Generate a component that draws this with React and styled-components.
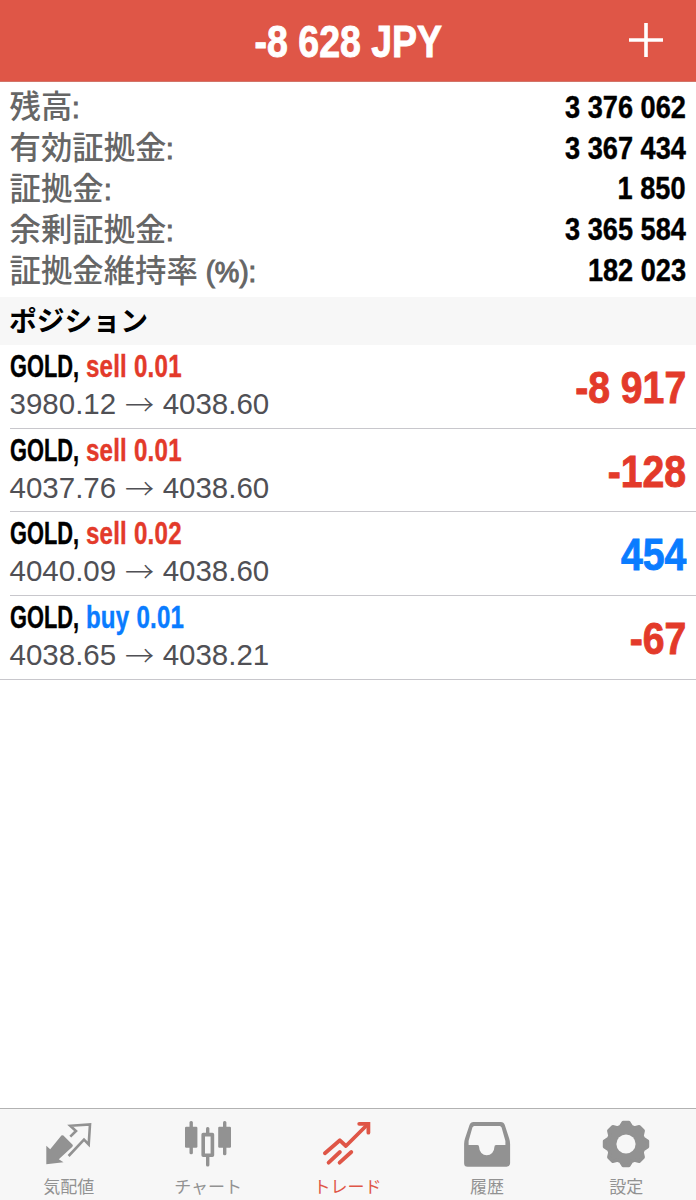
import React from "react";
import styled, { createGlobalStyle } from "styled-components";

const RED = "#e33a2a";
const BLUE = "#0a7cff";

const account = [
  { label: "残高", unit: ":", value: "3 376 062" },
  { label: "有効証拠金", unit: ":", value: "3 367 434" },
  { label: "証拠金", unit: ":", value: "1 850" },
  { label: "余剰証拠金", unit: ":", value: "3 365 584" },
  { label: "証拠金維持率", unit: " (%):", value: "182 023" },
];

const positions = [
  { id: 1, side: "sell", lot: "0.01", open: "3980.12", now: "4038.60", profit: "-8 917" },
  { id: 2, side: "sell", lot: "0.01", open: "4037.76", now: "4038.60", profit: "-128" },
  { id: 3, side: "sell", lot: "0.02", open: "4040.09", now: "4038.60", profit: "454" },
  { id: 4, side: "buy", lot: "0.01", open: "4038.65", now: "4038.21", profit: "-67" },
];

const QuotesIcon = () => (
  <StIcon viewBox="0 0 50 50">
    <path
      fill="currentColor"
      d="M2.3 45.3V26.7l3.9 3.6L17.4 16.6q1-.9 2 0l9 9q1 1.100 0 2.100L14.800 40.300l4.700 3z"
    />
    <path
      fill="none"
      stroke="currentColor"
      strokeWidth="2.6"
      d="M26.3 17.7L32 12l-5.7-5.2L46 5.400l-1.300 20.100-4.700-4.800L24.600 37"
    />
  </StIcon>
);

const ChartIcon = () => (
  <StIcon viewBox="0 0 50 50">
    <g fill="currentColor">
      <rect x="6.5" y="2" width="3.4" height="33.2" rx="1.5" />
      <rect x="2" y="7.7" width="12.4" height="21" rx="1.2" />
      <rect x="40" y="2" width="3.4" height="34.3" rx="1.5" />
      <rect x="35.2" y="7.7" width="12.8" height="21" rx="1.2" />
      <rect x="23" y="8" width="3.4" height="8" rx="1.5" />
      <rect x="23" y="36" width="3.4" height="11.6" rx="1.5" />
    </g>
    <rect
      x="20.2"
      y="15.6"
      width="9.2"
      height="20.6"
      fill="none"
      stroke="currentColor"
      strokeWidth="3.6"
      strokeLinejoin="round"
    />
  </StIcon>
);

const TradeIcon = () => (
  <StIcon viewBox="0 0 50 50">
    <g
      fill="none"
      stroke="currentColor"
      strokeWidth="3.8"
      strokeLinecap="round"
      strokeLinejoin="round"
    >
      <path d="M2.9 34.3l15-13 6 5.7L46 5" />
      <path strokeLinejoin="miter" d="M37.2 4.8h9.2v8.9" />
      <path d="M6.6 43.7L17.9 33M17.6 43.7L29.3 33" />
    </g>
  </StIcon>
);

const HistoryIcon = () => (
  <StIcon viewBox="0 0 50 50">
    <path
      fill="currentColor"
      fillRule="evenodd"
      d="M11.5 3h27.3q3 0 4 3l4.4 13.5q.9 2.7.9 5.5v19.2q0 3.5-3.5 3.5h-39q-3.5 0-3.5-3.5V25q0-2.8.9-5.5L7.5 6q1-3 4-3z
         M12.4 7q-1.5 0-2 1.5L6.6 22v4h8.8q1.7 0 1.7 2a7.6 8.3 0 0 0 15.3 0q0-2 1.7-2h9.3v-4L39.6 8.500q-.5-1.500-2-1.500z"
    />
  </StIcon>
);

// outline of an eight-tooth gear
const gearPoints = Array.from({ length: 8 })
  .flatMap((_, i) =>
    [
      [-17.5, 18.2],
      [-7.5, 21.7],
      [7.5, 21.7],
      [17.5, 18.2],
    ].map(([deg, r]) => {
      const a = ((i * 45 + deg) * Math.PI) / 180;
      return `${(25 + r * Math.cos(a)).toFixed(2)},${(25 + r * Math.sin(a)).toFixed(2)}`;
    })
  )
  .join(" ");

const SettingsIcon = () => (
  <StIcon viewBox="0 0 50 50">
    <polygon
      points={gearPoints}
      fill="currentColor"
      stroke="currentColor"
      strokeWidth="3.4"
      strokeLinejoin="round"
    />
    <circle cx="25" cy="25" r="9.6" fill="#f7f7f7" />
  </StIcon>
);

const tabs = [
  { name: "気配値", Icon: QuotesIcon },
  { name: "チャート", Icon: ChartIcon },
  { name: "トレード", Icon: TradeIcon, active: true },
  { name: "履歴", Icon: HistoryIcon },
  { name: "設定", Icon: SettingsIcon },
];

const App = () => {
  return (
    <StScreen>
      <GlobalStyle />
      <StHeader>
        <span />
        <StTitle>-8 628 JPY</StTitle>
        <StAddButton aria-label="追加">
          <svg width="34" height="34" viewBox="0 0 34 34">
            <path d="M17 0v34M0 17h34" stroke="#fff" strokeWidth="3.6" />
          </svg>
        </StAddButton>
      </StHeader>

      <StAccount>
        {account.map((item) => (
          <StAccountRow key={item.label}>
            <StLabel>
              {item.label}
              <StUnit>{item.unit}</StUnit>
            </StLabel>
            <StValue>{item.value}</StValue>
          </StAccountRow>
        ))}
      </StAccount>

      <StSection>ポジション</StSection>

      <StList>
        {positions.map((item) => (
          <StPosition key={item.id}>
            <div>
              <StSymbol>
                <StName>GOLD,</StName>{" "}
                <StSide color={item.side === "buy" ? BLUE : RED}>
                  {item.side} {item.lot}
                </StSide>
              </StSymbol>
              <StPrices>
                {item.open}
                <StArrow>→</StArrow>
                {item.now}
              </StPrices>
            </div>
            <StProfit color={item.profit.startsWith("-") ? RED : BLUE}>
              {item.profit}
            </StProfit>
          </StPosition>
        ))}
      </StList>

      <StTabBar>
        {tabs.map(({ name, Icon, active }) => (
          <StTab key={name} $active={active}>
            <Icon />
            <StTabName>{name}</StTabName>
          </StTab>
        ))}
      </StTabBar>
    </StScreen>
  );
};

const GlobalStyle = createGlobalStyle`
  * {
    box-sizing: border-box;
  }
  body {
    margin: 0;
    background: #fff;
    font-family: "Liberation Sans", "Noto Sans CJK JP", sans-serif;
  }
`;

// bold text, each use squeezes it sideways to look condensed
const StCondensed = styled.div`
  font-family: "Liberation Sans", sans-serif;
  font-weight: 700;
  white-space: nowrap;
  -webkit-text-stroke: 0.4px currentColor;
`;

const StScreen = styled.div`
  display: flex;
  flex-direction: column;
  width: 696px;
  height: 1200px;
  overflow: hidden;
`;

const StHeader = styled.header`
  display: grid;
  grid-template-columns: 1fr auto 1fr;
  align-items: center;
  height: 82px;
  padding-right: 33px;
  padding-left: 33px;
  background: #df5647;
  border-bottom: 1px solid #d27468;
`;

const StTitle = styled(StCondensed)`
  padding-top: 3px;
  font-size: 44.5px;
  line-height: 50px;
  color: #fff;
  -webkit-text-stroke-width: 0.9px;
  transform: scaleX(0.842);
`;

const StAddButton = styled.button`
  justify-self: end;
  display: flex;
  padding: 0 0 2px;
  border: 0;
  background: none;
`;

const StAccount = styled.section`
  height: 215px;
  padding: 4.5px 10px 0;
`;

const StAccountRow = styled.div`
  display: flex;
  justify-content: space-between;
  align-items: center;
  height: 40.8px;
`;

const StLabel = styled.div`
  display: flex;
  align-items: baseline;
  margin-left: -0.5px;
  font-family: "Noto Sans CJK JP", sans-serif;
  font-size: 31.4px;
  font-weight: 500;
  line-height: 38px;
  color: #666;
`;

const StUnit = styled.span`
  font-family: "Liberation Sans", sans-serif;
  font-size: 30px;
  font-weight: 400;
  white-space: pre;
  -webkit-text-stroke: 1.1px #666;
  transform: scaleX(0.92);
  transform-origin: left;
`;

const StValue = styled(StCondensed)`
  padding-top: 2px;
  font-size: 31px;
  line-height: 38px;
  color: #000;
  transform: scaleX(0.876);
  transform-origin: right;
`;

const StSection = styled.h2`
  height: 48px;
  margin: 0;
  padding-left: 9px;
  background: #f7f7f7;
  font-family: "Noto Sans CJK JP", sans-serif;
  font-size: 27.8px;
  font-weight: 700;
  line-height: 44px;
`;

const StList = styled.ul`
  flex: 1;
  margin: 0;
  padding: 0;
  list-style: none;
`;

const StPosition = styled.li`
  display: flex;
  justify-content: space-between;
  align-items: center;
  height: 83.6px;
  margin-left: 10px;
  padding-right: 10px;
  border-bottom: 1px solid #c8c7cc;

  &:last-child {
    height: 84.2px;
    margin-left: 0;
    padding-left: 10px;
  }
`;

const StSymbol = styled(StCondensed)`
  height: 36px;
  font-size: 30.5px;
  line-height: 36px;
  transform: scaleX(0.79);
  transform-origin: left;
`;

const StName = styled.span`
  display: inline-block;
  margin-right: -9px;
  transform: scaleX(0.905);
  transform-origin: left;
`;

const StSide = styled.span`
  letter-spacing: 0.3px;
  color: ${(props) => props.color};
`;

const StPrices = styled.div`
  display: flex;
  align-items: center;
  margin-left: -0.5px;
  font-size: 29.5px;
  line-height: 38px;
  color: #505055;
`;

const StArrow = styled.span`
  width: 46.5px;
  padding-bottom: 2px;
  font-family: "Noto Sans CJK JP", sans-serif;
  font-size: 29px;
  font-weight: 300;
  text-align: center;
`;

const StProfit = styled(StCondensed)`
  padding-top: 4px;
  font-size: 44.5px;
  line-height: 50px;
  color: ${(props) => props.color};
  -webkit-text-stroke-width: 0.9px;
  transform: scaleX(0.88);
  transform-origin: right;
`;

const StTabBar = styled.nav`
  display: grid;
  grid-template-columns: repeat(5, 1fr);
  width: 697px;
  height: 92px;
  margin-left: -1px;
  padding-top: 10px;
  background: #f7f7f7;
  border-top: 1px solid #b2b2b2;
`;

const StTab = styled.div`
  display: flex;
  flex-direction: column;
  align-items: center;
  color: ${(props) => (props.$active ? "#df5647" : "#929292")};
`;

const StIcon = styled.svg`
  width: 50px;
  height: 50px;
`;

const StTabName = styled.span`
  margin-top: 3.5px;
  font-family: "Noto Sans CJK JP", sans-serif;
  font-size: 17px;
  line-height: 25px;
`;

export default App;
